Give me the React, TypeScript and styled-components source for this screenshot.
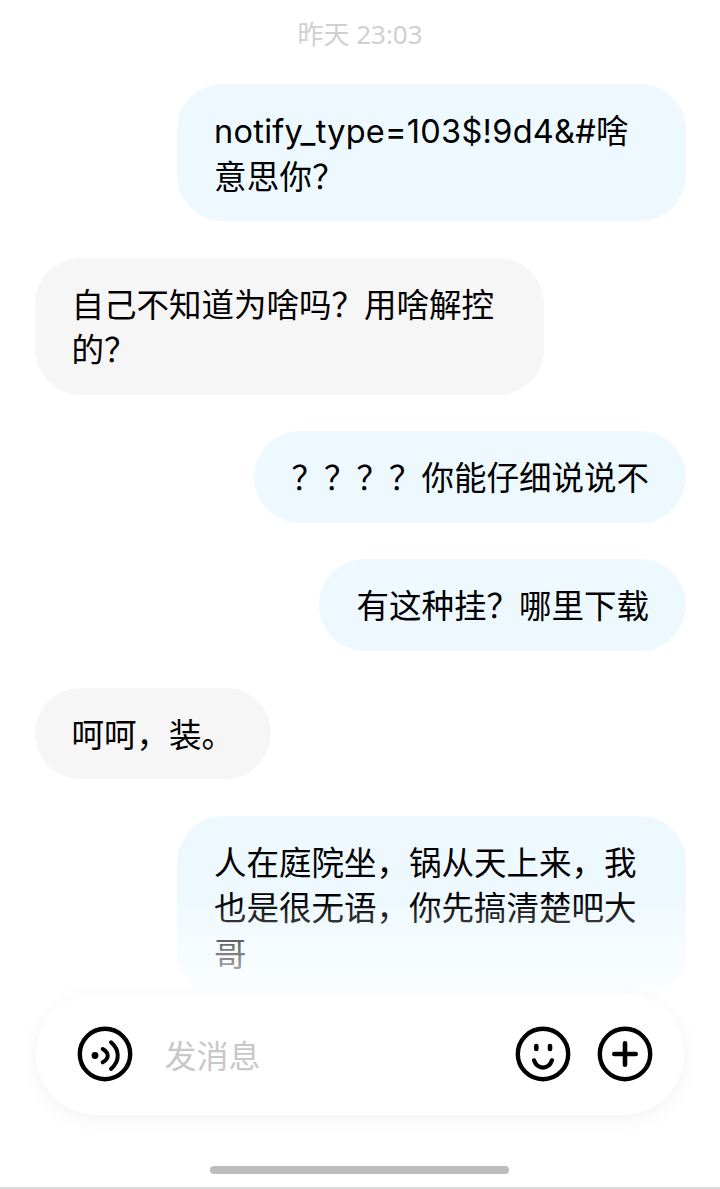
import React, { FC } from "react";
import styled, { createGlobalStyle } from "styled-components";

type MessageType = {
  id: number;
  mine: boolean;
  tracking?: number;
  text: string;
};

const messages: MessageType[] = [
  { id: 1, mine: true, tracking: 0.27, text: "notify_type=103$!9d4&#啥意思你？" },
  { id: 2, mine: false, text: "自己不知道为啥吗？用啥解控的？" },
  { id: 3, mine: true, text: "？？？？你能仔细说说不" },
  { id: 4, mine: true, text: "有这种挂？哪里下载" },
  { id: 5, mine: false, text: "呵呵，装。" },
  { id: 6, mine: true, text: "人在庭院坐，锅从天上来，我也是很无语，你先搞清楚吧大哥" },
];

const VoiceIcon: FC = () => (
  <svg width="56" height="56" viewBox="0 0 56 56" fill="none" stroke="#000" strokeLinecap="round">
    <circle cx="28" cy="28" r="25.2" strokeWidth="4.4" />
    <circle cx="18" cy="29.5" r="3.4" fill="#000" stroke="none" />
    <path d="M25.7 23C32.4 27 32.4 32.3 25.7 36.3" strokeWidth="4" />
    <path d="M34 16.3C43 24 43 35 34 43" strokeWidth="4" />
  </svg>
);

const SmileIcon: FC = () => (
  <svg width="56" height="56" viewBox="0 0 56 56" fill="none" stroke="#000" strokeLinecap="round">
    <circle cx="28" cy="28" r="25.2" strokeWidth="4.4" />
    <path d="M21.3 20v3M35 20v3" strokeWidth="4.6" />
    <path d="M19 34.3C22.5 44 33.5 44 37 34.3" strokeWidth="4.2" />
  </svg>
);

const PlusIcon: FC = () => (
  <svg width="56" height="56" viewBox="0 0 56 56" fill="none" stroke="#000" strokeLinecap="round">
    <circle cx="28" cy="28" r="25.2" strokeWidth="4.4" />
    <path d="M17.3 28h21.4M28 17.3v21.4" strokeWidth="4.6" />
  </svg>
);

export default function App() {
  return (
    <Screen>
      <GlobalStyle />
      <Time>昨天 23:03</Time>
      <MessageList>
        {messages.map((item) => (
          <Bubble key={item.id} $mine={item.mine} $tracking={item.tracking ?? 0}>
            {item.text}
          </Bubble>
        ))}
      </MessageList>
      <Footer>
        <Composer>
          <VoiceIcon />
          <Placeholder>发消息</Placeholder>
          <Actions>
            <SmileIcon />
            <PlusIcon />
          </Actions>
        </Composer>
        <HomeBar />
      </Footer>
    </Screen>
  );
}

const GlobalStyle = createGlobalStyle`
  html, body {
    margin: 0;
    padding: 0;
    background: #ffffff;
  }
`;

const Screen = styled.main`
  position: relative;
  display: flex;
  flex-direction: column;
  width: 720px;
  height: 1189px;
  overflow: hidden;
  background: #ffffff;
  font-family: "Inter", "Noto Sans CJK SC", sans-serif;
`;

const Time = styled.div`
  padding-top: 14px;
  height: 42px;
  line-height: 40px;
  text-align: center;
  font-family: "Noto Sans", "Noto Sans CJK SC", sans-serif;
  font-size: 26px;
  color: #d0d0d0;
`;

const MessageList = styled.section`
  display: flex;
  flex-direction: column;
  gap: 36.5px;
  padding: 28px 34px 0 34.5px;
`;

const Bubble = styled.div<{ $mine: boolean; $tracking: number }>`
  align-self: ${(p) => (p.$mine ? "flex-end" : "flex-start")};
  box-sizing: border-box;
  max-width: 509px;
  padding: 25px 37px 21px;
  border-radius: 46px;
  font-size: 32.5px;
  line-height: 45.6px;
  letter-spacing: ${(p) => p.$tracking}px;
  color: #000000;
  background: ${(p) => (p.$mine ? "#eef9ff" : "#f6f6f6")};
`;

const Footer = styled.footer`
  position: absolute;
  left: 0;
  right: 0;
  bottom: 0;
  height: 290px;
  box-sizing: border-box;
  padding-top: 94px;
  display: flex;
  flex-direction: column;
  align-items: center;
  background: linear-gradient(
    to bottom,
    rgba(255, 255, 255, 0) 0,
    rgba(255, 255, 255, 0.85) 94px,
    #ffffff 130px
  );
  border-bottom: 2px solid #dcdcdc;
`;

const Composer = styled.div`
  display: flex;
  align-items: center;
  box-sizing: border-box;
  width: 648px;
  height: 122px;
  padding: 0 31.5px 0 41px;
  border-radius: 61px;
  background: #ffffff;
  box-shadow: 0 4px 20px rgba(0, 0, 0, 0.05);
`;

const Placeholder = styled.span`
  flex: 1;
  margin-left: 31.5px;
  font-size: 32px;
  color: #c8c8c8;
`;

const Actions = styled.div`
  display: flex;
  gap: 26px;
`;

const HomeBar = styled.div`
  width: 299px;
  height: 8px;
  margin: 51px 1px 0 0;
  border-radius: 4px;
  background: #bdbdbd;
`;
